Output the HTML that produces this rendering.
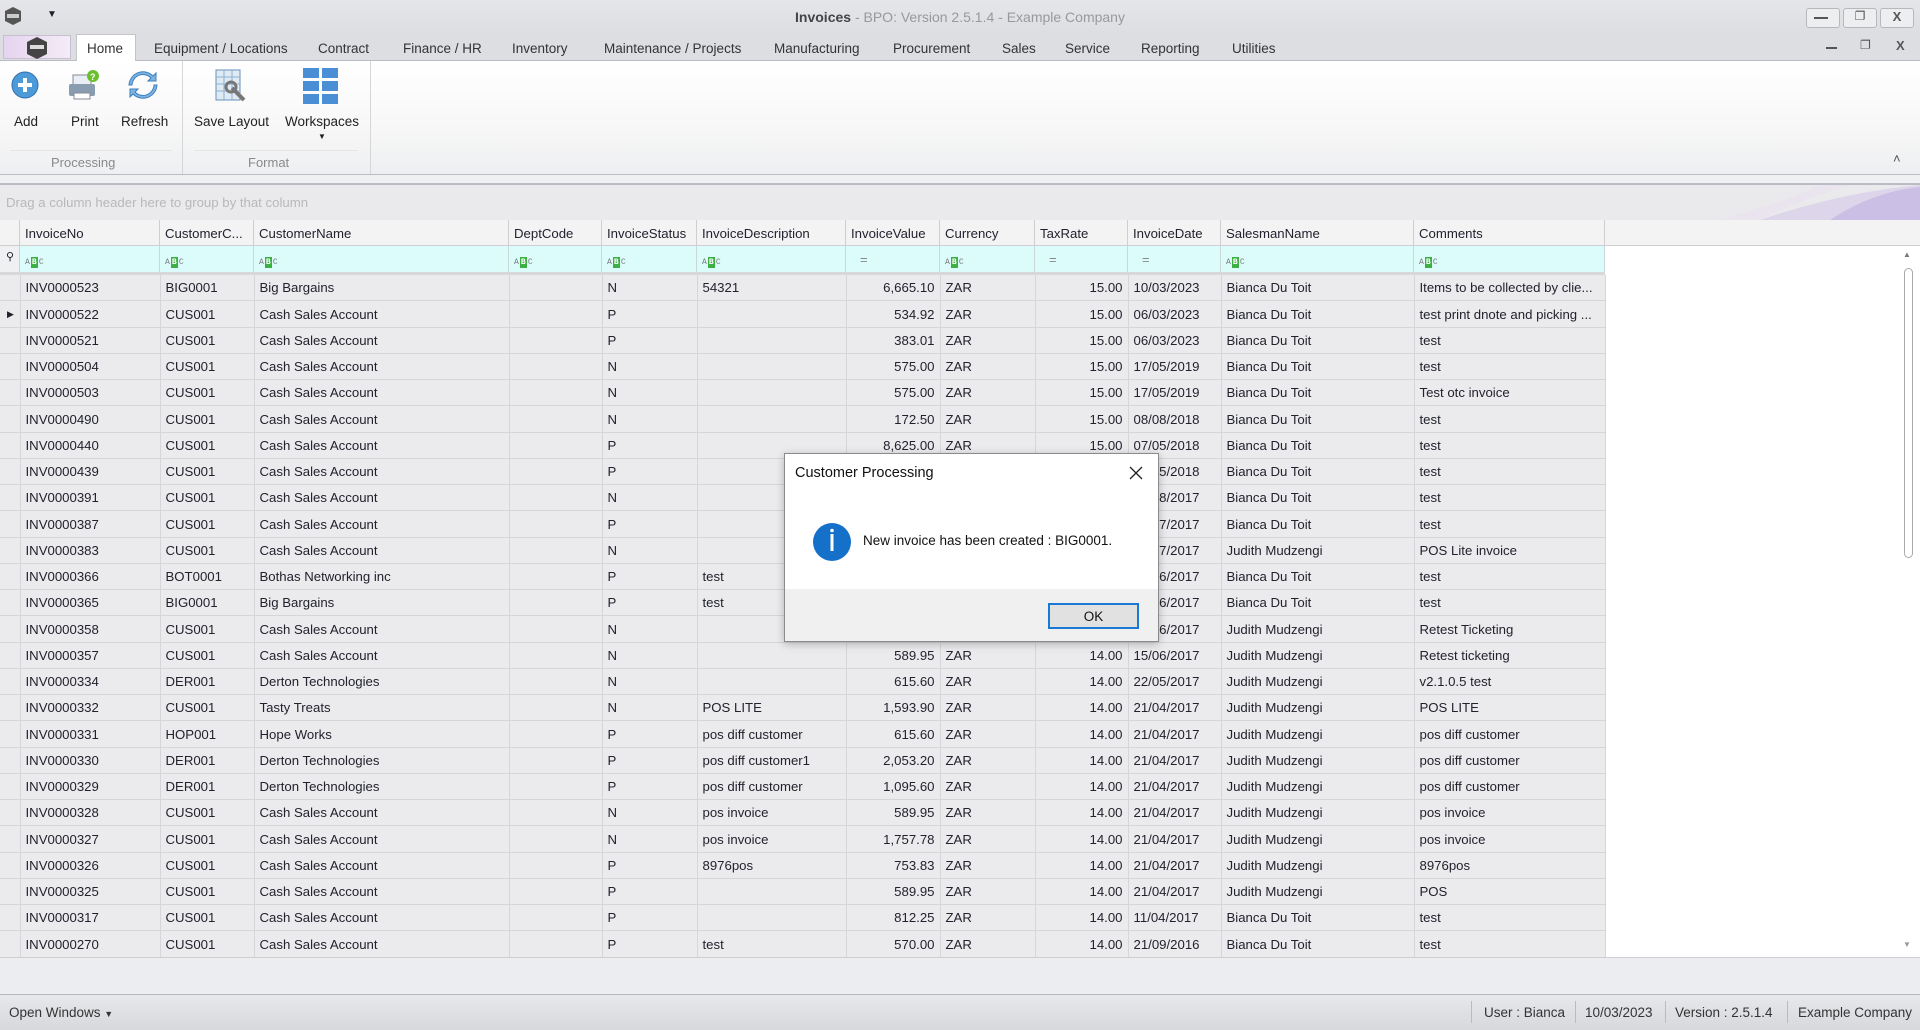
<!DOCTYPE html>
<html><head><meta charset="utf-8">
<style>
*{box-sizing:border-box;margin:0;padding:0}
body{width:1920px;height:1030px;overflow:hidden;font-family:"Liberation Sans",sans-serif;font-size:13px;color:#1f1f2a;background:#eef0f2;position:relative}
.abs{position:absolute}
#title{left:0;top:0;width:1920px;height:34px;background:linear-gradient(#e4e6ea,#dcdee2)}
#tabs{left:0;top:34px;width:1920px;height:27px;background:#dcdee2;border-bottom:1px solid #b9bcc2}
.tab{position:absolute;top:7px;font-size:13.5px;color:#333}
#ribbon{left:0;top:61px;width:1920px;height:114px;background:linear-gradient(#fff,#f7f7f7 60%,#eeeff1);border-bottom:1px solid #b9bcc2}
.lbl{position:absolute;font-size:13.5px;color:#222;text-align:center}
.grp{position:absolute;top:94px;font-size:13px;color:#8a8a8a}
#groupby{left:0;top:183px;width:1920px;height:37px;background:#eaeaec;border-top:2px solid #b9bcc2}
table{position:absolute;left:0;top:274.7px;border-collapse:collapse;table-layout:fixed;width:1605px}
td{height:26.25px;border-right:1px solid #d6d6d8;border-bottom:1px solid #d6d6d8;padding:0 0 0 5px;white-space:nowrap;overflow:hidden;background:#ebebed;font-size:13.2px;color:#22222e}
td.r{text-align:right;padding:0 5px 0 0}
td.ind{background:#ebebed;padding:0}
.hdr{position:absolute;top:220px;height:26px;background:#f3f3f4;border-right:1px solid #cfcfd2;border-bottom:1px solid #cfcfd2;padding:6px 0 0 5px;font-size:13.2px;color:#22222e;white-space:nowrap}
.flt{position:absolute;top:246px;height:26px;background:#dcfcfc;border-right:1px solid #c8d8d8;padding:8px 0 0 5px;line-height:11px}
.abc{display:inline-block;height:11px;line-height:11px;font-size:8px;color:#777;font-family:"Liberation Mono",monospace;white-space:nowrap}
.abc i{display:inline-block;font-style:normal;vertical-align:top}
.abc b{display:inline-block;background:#3cb043;color:#fff;width:7px;height:11px;line-height:11px;font-size:8px;text-align:center;vertical-align:top;margin:0 1px}
</style></head><body>

<div id="title" class="abs">
  <svg class="abs" style="left:4px;top:6px" width="18" height="20"><polygon points="9,1 17,5 17,15 9,19 1,15 1,5" fill="#555"/><rect x="3" y="8" width="12" height="4" fill="#ccc"/></svg>
  <div class="abs" style="left:47px;top:9px;font-size:10px">&#9660;</div>
  <div class="abs" style="left:0;width:1920px;top:9px;text-align:center;font-size:14px;color:#999"><b style="color:#444">Invoices</b> - BPO: Version 2.5.1.4 - Example Company</div>
  <div class="abs" style="left:1806px;top:8px;width:34px;height:20px;border:1px solid #b6b8bc;border-radius:3px;background:#eceef0"></div>
  <div class="abs" style="left:1843px;top:8px;width:34px;height:20px;border:1px solid #b6b8bc;border-radius:3px;background:#eceef0;text-align:center;font-size:12px;color:#555">&#10064;</div>
  <div class="abs" style="left:1880px;top:8px;width:34px;height:20px;border:1px solid #b6b8bc;border-radius:3px;background:#eceef0;text-align:center;font-weight:bold;color:#555;font-size:13px">X</div>
  <div class="abs" style="left:1814px;top:17px;width:14px;height:2px;background:#555"></div>
</div>

<div id="tabs" class="abs">
  <div class="abs" style="left:3px;top:1px;width:68px;height:24px;background:linear-gradient(90deg,#e6d4ef,#f3ecf7);border:1px solid #c8c0d0"><svg style="position:absolute;left:22px;top:0" width="22" height="24"><polygon points="11,1 21,6 21,18 11,23 1,18 1,6" fill="#444"/><rect x="4" y="9" width="14" height="4" fill="#ddd"/></svg></div>
  <div class="abs" style="left:76px;top:0;width:60px;height:28px;background:#fff;border:1px solid #c4c6ca;border-bottom:none"></div>
  <div class="tab" style="left:87px">Home</div>
  <div class="tab" style="left:154px">Equipment / Locations</div>
  <div class="tab" style="left:318px">Contract</div>
  <div class="tab" style="left:403px">Finance / HR</div>
  <div class="tab" style="left:512px">Inventory</div>
  <div class="tab" style="left:604px">Maintenance / Projects</div>
  <div class="tab" style="left:774px">Manufacturing</div>
  <div class="tab" style="left:893px">Procurement</div>
  <div class="tab" style="left:1002px">Sales</div>
  <div class="tab" style="left:1065px">Service</div>
  <div class="tab" style="left:1141px">Reporting</div>
  <div class="tab" style="left:1232px">Utilities</div>
  <div class="abs" style="left:1826px;top:13px;width:11px;height:2px;background:#555"></div>
  <div class="abs" style="left:1860px;top:4px;font-size:12px;color:#555">&#10064;</div>
  <div class="abs" style="left:1896px;top:4px;font-weight:bold;color:#555">X</div>
</div>

<div id="ribbon" class="abs">
  <svg class="abs" style="left:10px;top:9px" width="30" height="30"><circle cx="15" cy="15" r="13" fill="#4d9ad8" stroke="#2f6fae"/><path d="M15 8v14M8 15h14" stroke="#fff" stroke-width="4"/></svg>
  <svg class="abs" style="left:67px;top:8px" width="34" height="34"><rect x="6" y="6" width="18" height="10" fill="#e8eef4" stroke="#889"/><rect x="2" y="15" width="26" height="12" rx="2" fill="#8a9cb0"/><rect x="7" y="24" width="16" height="6" fill="#fff" stroke="#889"/><circle cx="26" cy="7" r="6" fill="#6cbf2c"/><text x="23" y="11" font-size="9" fill="#fff" font-weight="bold">?</text></svg>
  <svg class="abs" style="left:127px;top:8px" width="32" height="32"><path d="M5 16a11 11 0 0 1 19-7l-3 3h8v-8l-3 3A14 14 0 0 0 2 16z" fill="#7db4e0" stroke="#3b7fc0"/><path d="M27 16a11 11 0 0 1-19 7l3-3H3v8l3-3a14 14 0 0 0 24-9z" fill="#7db4e0" stroke="#3b7fc0"/></svg>
  <svg class="abs" style="left:214px;top:7px" width="34" height="38"><rect x="2" y="2" width="24" height="30" fill="#dfeaf5" stroke="#6a90b8"/><path d="M2 9h24M2 16h24M2 23h24M10 2v30M18 2v30" stroke="#8eb0d2"/><path d="M18 20l12 12" stroke="#777" stroke-width="4"/><circle cx="17" cy="19" r="5" fill="none" stroke="#777" stroke-width="3"/></svg>
  <svg class="abs" style="left:303px;top:7px" width="36" height="36"><g fill="#4a8fd6"><rect x="0" y="0" width="16" height="10"/><rect x="19" y="0" width="16" height="10"/><rect x="0" y="13" width="16" height="10"/><rect x="19" y="13" width="16" height="10"/><rect x="0" y="26" width="16" height="10"/><rect x="19" y="26" width="16" height="10"/></g></svg>
  <div class="lbl" style="left:14px;top:53px">Add</div>
  <div class="lbl" style="left:71px;top:53px">Print</div>
  <div class="lbl" style="left:121px;top:53px">Refresh</div>
  <div class="lbl" style="left:194px;top:53px">Save Layout</div>
  <div class="lbl" style="left:285px;top:53px">Workspaces</div>
  <div class="abs" style="left:318px;top:71px;font-size:8px">&#9660;</div>
  <div class="abs" style="left:10px;top:89px;width:162px;height:1px;background:#e4e4e6"></div>
  <div class="abs" style="left:194px;top:89px;width:164px;height:1px;background:#e4e4e6"></div>
  <div class="grp" style="left:51px">Processing</div>
  <div class="grp" style="left:248px">Format</div>
  <div class="abs" style="left:182px;top:0;width:1px;height:113px;background:#d4d6da"></div>
  <div class="abs" style="left:370px;top:0;width:1px;height:113px;background:#d4d6da"></div>
  <div class="abs" style="left:1893px;top:90px;font-size:13px;color:#555">&#708;</div>
</div>

<div id="groupby" class="abs">
  <svg class="abs" style="left:1700px;top:0" width="220" height="35"><path d="M60 35C110 18 160 6 220 0V35Z" fill="#d7cdea" opacity=".7"/><path d="M130 35C160 15 190 5 220 2V35Z" fill="#c5b5e3" opacity=".7"/><path d="M20 35C70 20 100 10 120 0H150C110 12 80 25 60 35Z" fill="#eadff2" opacity=".6"/></svg>
  <div class="abs" style="left:6px;top:10px;color:#b8b8bc;font-size:13.2px">Drag a column header here to group by that column</div>
</div>

<div class="abs" style="left:1605px;top:220px;width:315px;height:26px;background:#f3f3f4;border-bottom:1px solid #cfcfd2"></div>
<div class="abs" style="left:1605px;top:246px;width:315px;height:711px;background:#fff"></div>
<div class="abs" style="left:0;top:272px;width:1605px;height:3px;background:#d8d8da"></div>

<div class="hdr" style="left:0;width:20px"></div>
<div class="hdr" style="left:20px;width:140px">InvoiceNo</div>
<div class="hdr" style="left:160px;width:94px">CustomerC...</div>
<div class="hdr" style="left:254px;width:255px">CustomerName</div>
<div class="hdr" style="left:509px;width:93px">DeptCode</div>
<div class="hdr" style="left:602px;width:95px">InvoiceStatus</div>
<div class="hdr" style="left:697px;width:149px">InvoiceDescription</div>
<div class="hdr" style="left:846px;width:94px">InvoiceValue</div>
<div class="hdr" style="left:940px;width:95px">Currency</div>
<div class="hdr" style="left:1035px;width:93px">TaxRate</div>
<div class="hdr" style="left:1128px;width:93px">InvoiceDate</div>
<div class="hdr" style="left:1221px;width:193px">SalesmanName</div>
<div class="hdr" style="left:1414px;width:191px">Comments</div>

<div class="flt" style="left:0;width:20px;background:#eef0f2;padding:6px 0 0 6px;font-size:11px">&#9906;</div>
<div class="flt" style="left:20px;width:140px"><span class="abc"><i>A</i><b>B</b><i>C</i></span></div>
<div class="flt" style="left:160px;width:94px"><span class="abc"><i>A</i><b>B</b><i>C</i></span></div>
<div class="flt" style="left:254px;width:255px"><span class="abc"><i>A</i><b>B</b><i>C</i></span></div>
<div class="flt" style="left:509px;width:93px"><span class="abc"><i>A</i><b>B</b><i>C</i></span></div>
<div class="flt" style="left:602px;width:95px"><span class="abc"><i>A</i><b>B</b><i>C</i></span></div>
<div class="flt" style="left:697px;width:149px"><span class="abc"><i>A</i><b>B</b><i>C</i></span></div>
<div class="flt" style="left:846px;width:94px;color:#888;padding-left:14px">=</div>
<div class="flt" style="left:940px;width:95px"><span class="abc"><i>A</i><b>B</b><i>C</i></span></div>
<div class="flt" style="left:1035px;width:93px;color:#888;padding-left:14px">=</div>
<div class="flt" style="left:1128px;width:93px;color:#888;padding-left:14px">=</div>
<div class="flt" style="left:1221px;width:193px"><span class="abc"><i>A</i><b>B</b><i>C</i></span></div>
<div class="flt" style="left:1414px;width:191px"><span class="abc"><i>A</i><b>B</b><i>C</i></span></div>

<table>
<colgroup><col style="width:20px"><col style="width:140px"><col style="width:94px"><col style="width:255px"><col style="width:93px"><col style="width:95px"><col style="width:149px"><col style="width:94px"><col style="width:95px"><col style="width:93px"><col style="width:93px"><col style="width:193px"><col style="width:191px"></colgroup>
<tr><td class="ind"></td><td>INV0000523</td><td>BIG0001</td><td>Big Bargains</td><td></td><td>N</td><td>54321</td><td class="r">6,665.10</td><td>ZAR</td><td class="r">15.00</td><td>10/03/2023</td><td>Bianca Du Toit</td><td>Items to be collected by clie...</td></tr>
<tr><td class="ind" style="font-size:9px;padding-left:7px">&#9654;</td><td>INV0000522</td><td>CUS001</td><td>Cash Sales Account</td><td></td><td>P</td><td></td><td class="r">534.92</td><td>ZAR</td><td class="r">15.00</td><td>06/03/2023</td><td>Bianca Du Toit</td><td>test print dnote and picking ...</td></tr>
<tr><td class="ind"></td><td>INV0000521</td><td>CUS001</td><td>Cash Sales Account</td><td></td><td>P</td><td></td><td class="r">383.01</td><td>ZAR</td><td class="r">15.00</td><td>06/03/2023</td><td>Bianca Du Toit</td><td>test</td></tr>
<tr><td class="ind"></td><td>INV0000504</td><td>CUS001</td><td>Cash Sales Account</td><td></td><td>N</td><td></td><td class="r">575.00</td><td>ZAR</td><td class="r">15.00</td><td>17/05/2019</td><td>Bianca Du Toit</td><td>test</td></tr>
<tr><td class="ind"></td><td>INV0000503</td><td>CUS001</td><td>Cash Sales Account</td><td></td><td>N</td><td></td><td class="r">575.00</td><td>ZAR</td><td class="r">15.00</td><td>17/05/2019</td><td>Bianca Du Toit</td><td>Test otc invoice</td></tr>
<tr><td class="ind"></td><td>INV0000490</td><td>CUS001</td><td>Cash Sales Account</td><td></td><td>N</td><td></td><td class="r">172.50</td><td>ZAR</td><td class="r">15.00</td><td>08/08/2018</td><td>Bianca Du Toit</td><td>test</td></tr>
<tr><td class="ind"></td><td>INV0000440</td><td>CUS001</td><td>Cash Sales Account</td><td></td><td>P</td><td></td><td class="r">8,625.00</td><td>ZAR</td><td class="r">15.00</td><td>07/05/2018</td><td>Bianca Du Toit</td><td>test</td></tr>
<tr><td class="ind"></td><td>INV0000439</td><td>CUS001</td><td>Cash Sales Account</td><td></td><td>P</td><td></td><td class="r">575.00</td><td>ZAR</td><td class="r">15.00</td><td>07/05/2018</td><td>Bianca Du Toit</td><td>test</td></tr>
<tr><td class="ind"></td><td>INV0000391</td><td>CUS001</td><td>Cash Sales Account</td><td></td><td>N</td><td></td><td class="r">575.00</td><td>ZAR</td><td class="r">14.00</td><td>28/08/2017</td><td>Bianca Du Toit</td><td>test</td></tr>
<tr><td class="ind"></td><td>INV0000387</td><td>CUS001</td><td>Cash Sales Account</td><td></td><td>P</td><td></td><td class="r">575.00</td><td>ZAR</td><td class="r">14.00</td><td>26/07/2017</td><td>Bianca Du Toit</td><td>test</td></tr>
<tr><td class="ind"></td><td>INV0000383</td><td>CUS001</td><td>Cash Sales Account</td><td></td><td>N</td><td></td><td class="r">575.00</td><td>ZAR</td><td class="r">14.00</td><td>25/07/2017</td><td>Judith Mudzengi</td><td>POS Lite invoice</td></tr>
<tr><td class="ind"></td><td>INV0000366</td><td>BOT0001</td><td>Bothas Networking inc</td><td></td><td>P</td><td>test</td><td class="r">575.00</td><td>ZAR</td><td class="r">14.00</td><td>30/06/2017</td><td>Bianca Du Toit</td><td>test</td></tr>
<tr><td class="ind"></td><td>INV0000365</td><td>BIG0001</td><td>Big Bargains</td><td></td><td>P</td><td>test</td><td class="r">575.00</td><td>ZAR</td><td class="r">14.00</td><td>29/06/2017</td><td>Bianca Du Toit</td><td>test</td></tr>
<tr><td class="ind"></td><td>INV0000358</td><td>CUS001</td><td>Cash Sales Account</td><td></td><td>N</td><td></td><td class="r">589.95</td><td>ZAR</td><td class="r">14.00</td><td>16/06/2017</td><td>Judith Mudzengi</td><td>Retest Ticketing</td></tr>
<tr><td class="ind"></td><td>INV0000357</td><td>CUS001</td><td>Cash Sales Account</td><td></td><td>N</td><td></td><td class="r">589.95</td><td>ZAR</td><td class="r">14.00</td><td>15/06/2017</td><td>Judith Mudzengi</td><td>Retest ticketing</td></tr>
<tr><td class="ind"></td><td>INV0000334</td><td>DER001</td><td>Derton Technologies</td><td></td><td>N</td><td></td><td class="r">615.60</td><td>ZAR</td><td class="r">14.00</td><td>22/05/2017</td><td>Judith Mudzengi</td><td>v2.1.0.5 test</td></tr>
<tr><td class="ind"></td><td>INV0000332</td><td>CUS001</td><td>Tasty Treats</td><td></td><td>N</td><td>POS LITE</td><td class="r">1,593.90</td><td>ZAR</td><td class="r">14.00</td><td>21/04/2017</td><td>Judith Mudzengi</td><td>POS LITE</td></tr>
<tr><td class="ind"></td><td>INV0000331</td><td>HOP001</td><td>Hope Works</td><td></td><td>P</td><td>pos diff customer</td><td class="r">615.60</td><td>ZAR</td><td class="r">14.00</td><td>21/04/2017</td><td>Judith Mudzengi</td><td>pos diff customer</td></tr>
<tr><td class="ind"></td><td>INV0000330</td><td>DER001</td><td>Derton Technologies</td><td></td><td>P</td><td>pos diff customer1</td><td class="r">2,053.20</td><td>ZAR</td><td class="r">14.00</td><td>21/04/2017</td><td>Judith Mudzengi</td><td>pos diff customer</td></tr>
<tr><td class="ind"></td><td>INV0000329</td><td>DER001</td><td>Derton Technologies</td><td></td><td>P</td><td>pos diff customer</td><td class="r">1,095.60</td><td>ZAR</td><td class="r">14.00</td><td>21/04/2017</td><td>Judith Mudzengi</td><td>pos diff customer</td></tr>
<tr><td class="ind"></td><td>INV0000328</td><td>CUS001</td><td>Cash Sales Account</td><td></td><td>N</td><td>pos invoice</td><td class="r">589.95</td><td>ZAR</td><td class="r">14.00</td><td>21/04/2017</td><td>Judith Mudzengi</td><td>pos invoice</td></tr>
<tr><td class="ind"></td><td>INV0000327</td><td>CUS001</td><td>Cash Sales Account</td><td></td><td>N</td><td>pos invoice</td><td class="r">1,757.78</td><td>ZAR</td><td class="r">14.00</td><td>21/04/2017</td><td>Judith Mudzengi</td><td>pos invoice</td></tr>
<tr><td class="ind"></td><td>INV0000326</td><td>CUS001</td><td>Cash Sales Account</td><td></td><td>P</td><td>8976pos</td><td class="r">753.83</td><td>ZAR</td><td class="r">14.00</td><td>21/04/2017</td><td>Judith Mudzengi</td><td>8976pos</td></tr>
<tr><td class="ind"></td><td>INV0000325</td><td>CUS001</td><td>Cash Sales Account</td><td></td><td>P</td><td></td><td class="r">589.95</td><td>ZAR</td><td class="r">14.00</td><td>21/04/2017</td><td>Judith Mudzengi</td><td>POS</td></tr>
<tr><td class="ind"></td><td>INV0000317</td><td>CUS001</td><td>Cash Sales Account</td><td></td><td>P</td><td></td><td class="r">812.25</td><td>ZAR</td><td class="r">14.00</td><td>11/04/2017</td><td>Bianca Du Toit</td><td>test</td></tr>
<tr><td class="ind"></td><td>INV0000270</td><td>CUS001</td><td>Cash Sales Account</td><td></td><td>P</td><td>test</td><td class="r">570.00</td><td>ZAR</td><td class="r">14.00</td><td>21/09/2016</td><td>Bianca Du Toit</td><td>test</td></tr>
</table>

<div class="abs" style="left:1903px;top:250px;font-size:8px;color:#777">&#9650;</div>
<div class="abs" style="left:1904px;top:268px;width:9px;height:290px;border:1px solid #aaa;border-radius:5px;background:#fff"></div>
<div class="abs" style="left:1903px;top:940px;font-size:8px;color:#999">&#9660;</div>

<div class="abs" style="left:0;top:957px;width:1920px;height:38px;background:#ecedf0;border-top:1px solid #cfcfd2;border-bottom:1px solid #b6b8bc"></div>

<div class="abs" style="left:0;top:995px;width:1920px;height:35px;background:linear-gradient(#e7e8eb,#d6d8dc);font-size:13.5px;color:#333">
  <div class="abs" style="left:9px;top:10px">Open Windows <span style="font-size:9px">&#9660;</span></div>
  <div class="abs" style="left:1471px;top:6px;width:1px;height:22px;background:#bbb"></div>
  <div class="abs" style="left:1484px;top:10px">User : Bianca</div>
  <div class="abs" style="left:1575px;top:6px;width:1px;height:22px;background:#bbb"></div>
  <div class="abs" style="left:1585px;top:10px">10/03/2023</div>
  <div class="abs" style="left:1665px;top:6px;width:1px;height:22px;background:#bbb"></div>
  <div class="abs" style="left:1675px;top:10px">Version : 2.5.1.4</div>
  <div class="abs" style="left:1787px;top:6px;width:1px;height:22px;background:#bbb"></div>
  <div class="abs" style="left:1798px;top:10px">Example Company</div>
</div>

<div class="abs" style="left:784px;top:453px;width:375px;height:189px;background:#fff;border:1px solid #8a8a8a;box-shadow:0 2px 8px rgba(0,0,0,.25)">
  <div class="abs" style="left:10px;top:11px;font-size:14.5px;color:#111">Customer Processing</div>
  <svg class="abs" style="left:344px;top:12px" width="14" height="14"><path d="M1 1L13 13M13 1L1 13" stroke="#222" stroke-width="1.3"/></svg>
  <svg class="abs" style="left:27px;top:68px" width="40" height="40"><circle cx="20" cy="20" r="19" fill="#1470c8"/><rect x="18.5" y="12" width="3" height="17" fill="#fff"/><circle cx="20" cy="8.5" r="1.8" fill="#fff"/></svg>
  <div class="abs" style="left:78px;top:79px;font-size:13.5px;color:#111">New invoice has been created : BIG0001.</div>
  <div class="abs" style="left:0;top:135px;width:373px;height:52px;background:#f0f0f0"></div>
  <div class="abs" style="left:263px;top:149px;width:91px;height:26px;border:2px solid #1a78d6;background:#e1e1e1;text-align:center;padding-top:4px;font-size:13.5px;color:#111">OK</div>
</div>
</body></html>
